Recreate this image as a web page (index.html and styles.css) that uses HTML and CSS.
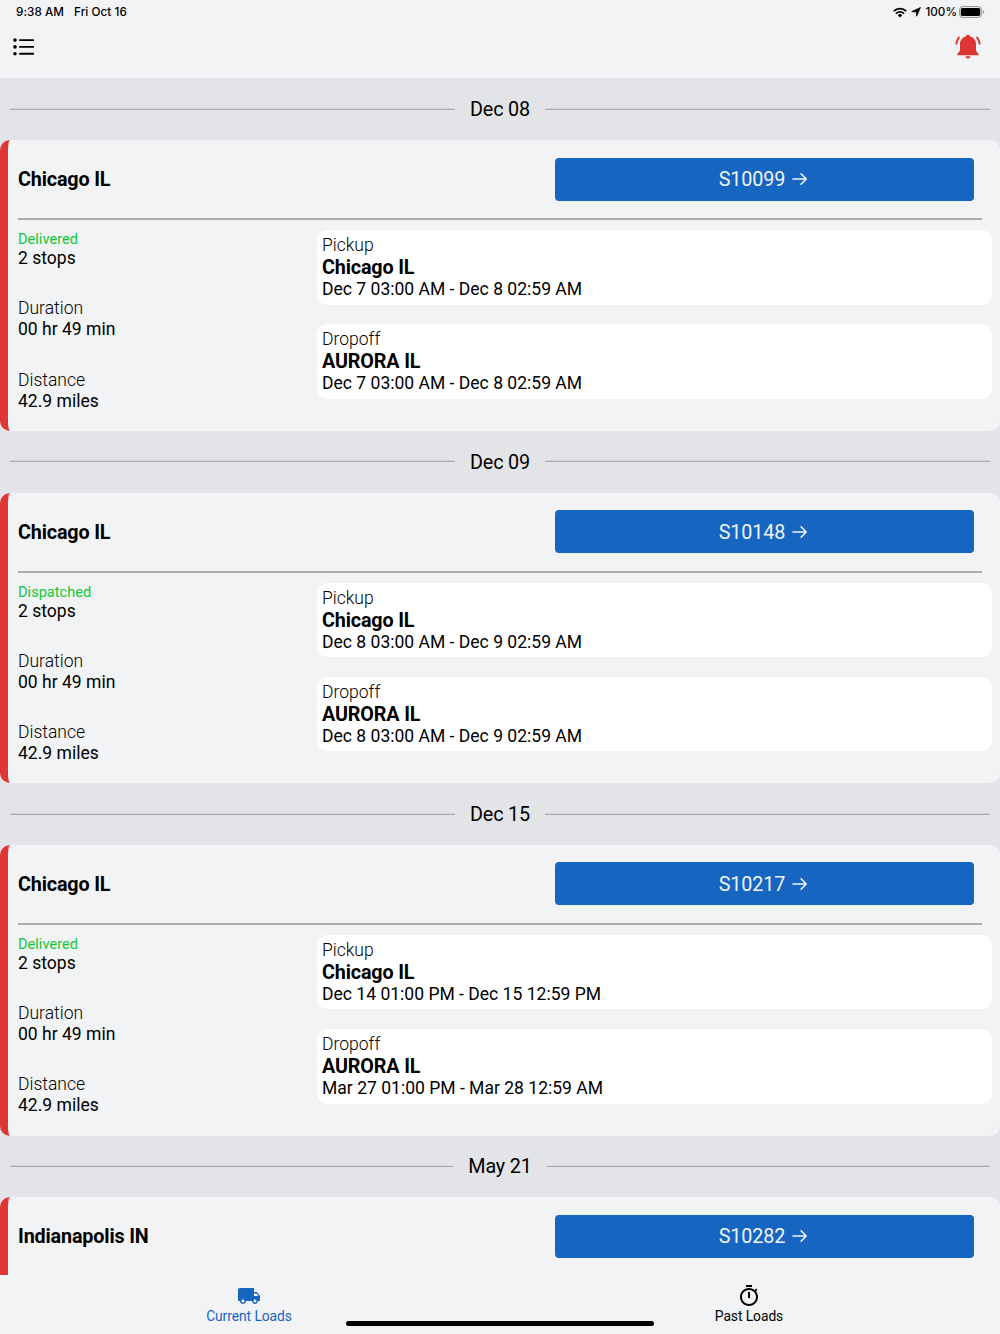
FILE: index.html
```html
<!DOCTYPE html>
<html lang="en">
<head>
<meta charset="utf-8">
<title>Current Loads</title>
<link rel="stylesheet" href="styles.css">
</head>
<body>
<svg class="sprite" aria-hidden="true">
  <symbol id="arrow" viewBox="0 0 16 14"><path d="M1 7h13M9 1.800 14.200 7 9 12.200" fill="none" stroke="currentColor" stroke-width="1.600" stroke-linecap="round" stroke-linejoin="round"/></symbol>
</svg>
<div class="app">
  <header class="top">
    <div class="status">
      <div class="status-left"><span>9:38 AM</span><span>Fri Oct 16</span></div>
      <div class="status-right">
        <svg class="wifi" viewBox="0 0 14 11"><path d="M.8 4.200a8.800 8.800 0 0 1 12.400 0M3 6.600a5.600 5.600 0 0 1 8 0" fill="none" stroke="#000" stroke-width="1.900"/><path d="M4.800 8.200a3.100 3.100 0 0 1 4.400 0L7 10.500z"/></svg>
        <svg class="locate" viewBox="0 0 10 10"><path d="M9.400.6 5.600 9.200V4.900L.8 4.600z" stroke="#000" stroke-width=".8" stroke-linejoin="round"/></svg>
        <span>100%</span>
        <svg class="battery" viewBox="0 0 26 12"><rect x=".6" y=".6" width="21.800" height="10.800" rx="3" fill="none" stroke="#8c8d8f" stroke-width="1"/><rect x="1.800" y="1.900" width="19.400" height="8.200" rx="1.700"/><path d="M23.900 4.200q1.300.5 1.300 1.800t-1.300 1.800z" fill="#8c8d8f"/></svg>
      </div>
    </div>
    <nav class="toolbar">
      <svg class="menu" viewBox="0 0 22 18"><g fill="none" stroke="#000" stroke-width="1.900" stroke-linecap="round"><path d="M6.900 2.100h13.300M6.900 8.900h13.300M6.900 15.700h13.300"/></g><circle cx="2" cy="2.100" r="1.800"/><circle cx="2" cy="8.900" r="1.800"/><circle cx="2" cy="15.700" r="1.800"/></svg>
      <svg class="bell" viewBox="0 0 26 26"><path d="M13 .7c1.200 0 2.100.8 2.200 1.700 3.500.9 5.800 3.800 5.800 7.600v6.300c0 1.500 2.700 3 2.700 4.300v.6H2.300v-.6c0-1.300 2.700-2.800 2.700-4.300V10c0-3.800 2.300-6.700 5.800-7.600.1-.9 1-1.700 2.200-1.700zM10.600 22.200h4.800c-.2 1.500-1.100 2.300-2.400 2.300s-2.200-.8-2.400-2.300z"/><path d="M4.300 2.900Q1.800 5.700 1.300 10.500M21.700 2.900Q24.200 5.700 24.700 10.500" fill="none" stroke="#de3634" stroke-width="2"/></svg>
    </nav>
  </header>
  <main class="loads">
    <h2 class="date">Dec 08</h2>
    <article class="card">
      <div class="card-head"><h3>Chicago IL</h3><button class="go">S10099<svg><use href="#arrow"/></svg></button></div>
      <div class="card-body">
        <div class="facts">
          <p class="state">Delivered</p><p class="value">2 stops</p>
          <p class="label">Duration</p><p class="value">00 hr 49 min</p>
          <p class="label">Distance</p><p class="value">42.9 miles</p>
        </div>
        <div class="stops">
          <section class="stop"><p class="label">Pickup</p><h4>Chicago IL</h4><p>Dec 7 03:00 AM - Dec 8 02:59 AM</p></section>
          <section class="stop"><p class="label">Dropoff</p><h4>AURORA IL</h4><p>Dec 7 03:00 AM - Dec 8 02:59 AM</p></section>
        </div>
      </div>
    </article>
    <h2 class="date">Dec 09</h2>
    <article class="card">
      <div class="card-head"><h3>Chicago IL</h3><button class="go">S10148<svg><use href="#arrow"/></svg></button></div>
      <div class="card-body">
        <div class="facts">
          <p class="state">Dispatched</p><p class="value">2 stops</p>
          <p class="label">Duration</p><p class="value">00 hr 49 min</p>
          <p class="label">Distance</p><p class="value">42.9 miles</p>
        </div>
        <div class="stops">
          <section class="stop"><p class="label">Pickup</p><h4>Chicago IL</h4><p>Dec 8 03:00 AM - Dec 9 02:59 AM</p></section>
          <section class="stop"><p class="label">Dropoff</p><h4>AURORA IL</h4><p>Dec 8 03:00 AM - Dec 9 02:59 AM</p></section>
        </div>
      </div>
    </article>
    <h2 class="date">Dec 15</h2>
    <article class="card">
      <div class="card-head"><h3>Chicago IL</h3><button class="go">S10217<svg><use href="#arrow"/></svg></button></div>
      <div class="card-body">
        <div class="facts">
          <p class="state">Delivered</p><p class="value">2 stops</p>
          <p class="label">Duration</p><p class="value">00 hr 49 min</p>
          <p class="label">Distance</p><p class="value">42.9 miles</p>
        </div>
        <div class="stops">
          <section class="stop"><p class="label">Pickup</p><h4>Chicago IL</h4><p>Dec 14 01:00 PM - Dec 15 12:59 PM</p></section>
          <section class="stop"><p class="label">Dropoff</p><h4>AURORA IL</h4><p>Mar 27 01:00 PM - Mar 28 12:59 AM</p></section>
        </div>
      </div>
    </article>
    <h2 class="date">May 21</h2>
    <article class="card">
      <div class="card-head"><h3>Indianapolis IN</h3><button class="go">S10282<svg><use href="#arrow"/></svg></button></div>
    </article>
  </main>
  <footer class="tabs">
    <a class="tab active">
      <svg viewBox="0 0 24 24"><path d="M20 8h-3V4H3c-1.100 0-2 .9-2 2v11h2c0 1.660 1.340 3 3 3s3-1.340 3-3h6c0 1.660 1.340 3 3 3s3-1.340 3-3h2v-5l-3-4zM6 18.500c-.83 0-1.500-.67-1.500-1.500s.67-1.500 1.500-1.500 1.500.67 1.500 1.500-.67 1.500-1.500 1.500zm13.500-9l1.960 2.500H17V9.500h2.500zm-1.500 9c-.83 0-1.500-.67-1.500-1.500s.67-1.500 1.500-1.500 1.500.67 1.500 1.500-.67 1.500-1.500 1.500z"/></svg>
      <span>Current Loads</span>
    </a>
    <a class="tab">
      <svg viewBox="0 0 24 24"><path d="M15 1H9v2h6V1zm-4 13h2V8h-2v6zm8.030-6.610l1.420-1.420c-.43-.51-.9-.99-1.410-1.410l-1.420 1.420C16.070 4.740 14.120 4 12 4c-4.970 0-9 4.030-9 9s4.020 9 9 9 9-4.030 9-9c0-2.120-.74-4.070-1.970-5.610zM12 20c-3.870 0-7-3.130-7-7s3.130-7 7-7 7 3.130 7 7-3.130 7-7 7z"/></svg>
      <span>Past Loads</span>
    </a>
    <div class="home-bar"></div>
  </footer>
</div>
</body>
</html>
```
FILE: styles.css
```css
* { box-sizing: border-box; }
body, p, h2, h3, h4 { margin: 0; }
body { background: #e3e4e8; color: #000; font-family: Roboto, "Liberation Sans", sans-serif; }
svg { display: block; flex: none; }
.sprite { display: none; }
.app { display: flex; flex-direction: column; height: 1334px; overflow: hidden; }

.top { flex: none; height: 78.400px; background: #f2f3f5; }
.status { display: flex; justify-content: space-between; height: 24px; padding: 0 15px 0 16px; font: 500 11.700px/24px Inter, sans-serif; }
.status-left { display: flex; gap: 10px; letter-spacing: .05px; }
.status-right { display: flex; align-items: center; }
.wifi { width: 14px; height: 11px; margin-right: 4px; }
.locate { width: 10px; height: 10px; margin-right: 4px; }
.battery { width: 26px; height: 12px; margin-left: 2px; }
.toolbar { display: flex; justify-content: space-between; align-items: center; height: 45px; padding: 0 19.500px 0 13px; }
.menu { width: 22px; height: 18px; }
.bell { width: 26px; height: 26px; fill: #de3634; }

.loads { flex: 1; min-height: 0; overflow: hidden; }
.date { display: flex; align-items: center; gap: 15px; height: 61.800px; padding: 1px 10px 0; font-size: 19.750px; font-weight: 400; letter-spacing: -.15px; }
.date::before, .date::after { content: ""; flex: 1; height: 1px; margin-top: -1px; background: #abacae; box-shadow: 0 -1px #d3d4d7; }
.card { height: 290.600px; padding-right: 8px; border-left: 8px solid #de3634; border-radius: 10px; background: #f2f3f5; }
.card-head { display: flex; align-items: center; justify-content: space-between; height: 80px; margin: 0 10px; padding-right: 8px; border-bottom: 2px solid #adaeb0; }
h3, h4 { font-size: 19.750px; font-weight: 700; letter-spacing: -.15px; }
h3 { padding-top: 1px; }
.go { display: flex; align-items: center; justify-content: center; gap: 6.500px; width: 419.500px; height: 43px; padding: 1px 2px 0 0; border: 0; border-radius: 4px; background: #1665c1; color: #f2f3f5; font: 400 19.750px Roboto, sans-serif; letter-spacing: -.1px; }
.go svg { width: 16px; height: 14px; margin-top: -1px; }
.card-body { display: flex; padding-top: 10px; }
.facts { width: 309px; padding-left: 10px; font-size: 17.550px; line-height: 21px; }
.facts .state { font-size: 14.600px; line-height: 18px; color: #12c934; }
.facts .label { margin-top: 29.200px; }
.label { font-weight: 300; }
.stops { flex: 1; display: flex; flex-direction: column; gap: 19.750px; }
.stop { height: 74.400px; padding: 5px; border-radius: 10px; background: #fff; font-size: 17.550px; line-height: 21px; }
.stop h4 { padding-top: 1px; line-height: 22px; }

.tabs { position: relative; flex: none; display: flex; height: 59px; background: #f2f3f5; }
.tab { flex: 1; display: flex; flex-direction: column; align-items: center; padding: 9px 2px 0 0; font-size: 13.800px; line-height: 16px; letter-spacing: -.05px; }
.tab svg { width: 24px; height: 24px; margin-bottom: -.5px; fill: currentColor; }
.active { color: #1665c1; }
.home-bar { position: absolute; left: 346px; bottom: 8px; width: 308px; height: 5px; border-radius: 3px; background: #000; }
```
